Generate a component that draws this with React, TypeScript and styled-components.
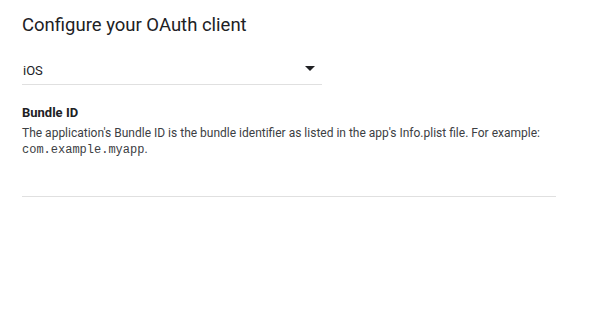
import styled, { createGlobalStyle } from "styled-components";

const GlobalStyle = createGlobalStyle`
  body {
    margin: 0;
    background: #ffffff;
    font-family: Roboto, "Liberation Sans", Arial, sans-serif;
    color: rgba(0, 0, 0, 0.87);
  }
`;

const Page = styled.div`
  width: 596px;
  height: 330px;
  padding: 13px 40px 0 22px;
  box-sizing: border-box;
`;

const Title = styled.h1`
  margin: 0;
  font-size: 18.5px;
  font-weight: 400;
  line-height: 24px;
  color: #202124;
`;

const SelectField = styled.div`
  width: 300px;
  height: 27px;
  margin-top: 21px;
  display: flex;
  align-items: center;
  justify-content: space-between;
  border-bottom: 1px solid #e0e0e0;
  box-sizing: border-box;
`;

const SelectValue = styled.span`
  font-size: 13px;
  color: #202124;
  padding-left: 1px;
  margin-top: -1px;
`;

const Arrow = styled.svg`
  width: 10px;
  height: 5px;
  margin-right: 7px;
  margin-top: -5px;
`;

const Section = styled.div`
  margin-top: 19px;
  width: 534px;
  padding-bottom: 38px;
  border-bottom: 1px solid #e0e0e0;
`;

const Label = styled.div`
  font-size: 13px;
  font-weight: 700;
  line-height: 18px;
  color: #202124;
`;

const Help = styled.p`
  margin: 3px 0 0;
  font-size: 12px;
  line-height: 16px;
  color: #3c4043;
`;

const Code = styled.code`
  font-family: "Liberation Mono", "Courier New", monospace;
  font-size: 12px;
  color: #3c4043;
`;

export default function App() {
  return (
    <>
      <GlobalStyle />
      <Page>
        <Title>Configure your OAuth client</Title>
        <SelectField>
          <SelectValue>iOS</SelectValue>
          <Arrow viewBox="0 0 10 5">
            <path d="M0 0 L5 5 L10 0 Z" fill="#202124" />
          </Arrow>
        </SelectField>
        <Section>
          <Label>Bundle ID</Label>
          <Help>
            The application's Bundle ID is the bundle identifier as listed in
            the app's Info.plist file. For example: <Code>com.example.myapp</Code>.
          </Help>
        </Section>
      </Page>
    </>
  );
}
